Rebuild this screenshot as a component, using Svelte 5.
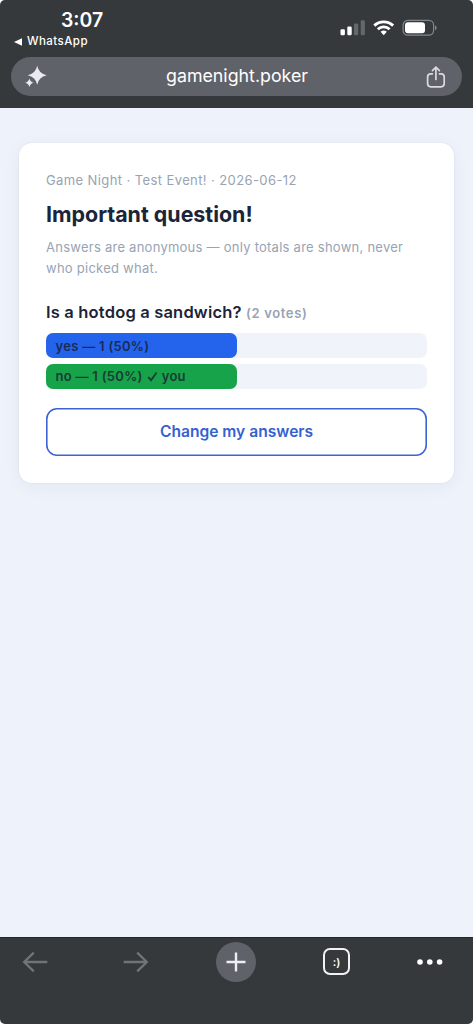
<script>
	let site = "gamenight.poker";
	let total = 2;
	let answers = [
		{ label: "yes", votes: 1, mine: false },
		{ label: "no", votes: 1, mine: true },
	];

	function percent(votes) {
		return Math.round((votes / total) * 100);
	}
</script>

<div class="screen">
	<header>
		<div class="status">
			<div class="clock">
				<span class="time">3:07</span>
				<span class="back">
					<svg width="8" height="8" viewBox="0 0 8 8"><path d="M0 4 8 0.3V7.7z" fill="#fff" /></svg>
					WhatsApp
				</span>
			</div>
			<svg class="indicators" width="98" height="18" viewBox="0 0 98 18">
				<g fill="#fff">
					<rect x="0.5" y="10.3" width="4.4" height="6" rx="1.2" />
					<rect x="7.3" y="7.6" width="4.4" height="8.7" rx="1.2" />
					<rect x="14" y="4.6" width="4.2" height="11.7" rx="1.2" opacity="0.24" />
					<rect x="20.7" y="1.3" width="4.2" height="15" rx="1.2" opacity="0.24" />
				</g>
				<g fill="none" stroke="#fff" stroke-width="2.9">
					<path d="M34.3 6.6A13.6 13.6 0 0 1 53.1 6.6" />
					<path d="M37.8 10.3A8.5 8.5 0 0 1 49.6 10.3" />
				</g>
				<path d="M40.6 12.8A4.6 4.6 0 0 1 46.8 12.8L43.7 16.2z" fill="#fff" />
				<rect x="63.1" y="1.4" width="30.5" height="14.8" rx="4.7" fill="none" stroke="#84878a" stroke-width="1.2" />
				<rect x="65" y="3.3" width="20" height="11" rx="3" fill="#fff" />
				<path d="M95 6.5c2.2.7 2.2 3.9 0 4.6z" fill="#84878a" />
			</svg>
		</div>
		<div class="address">
			<svg width="24" height="24" viewBox="0 0 24 24" fill="#e9ebf1">
				<path d="M13.2 0.8Q14.8 8.7 22.7 10.3Q14.8 11.9 13.2 19.8Q11.6 11.9 3.7 10.3Q11.6 8.7 13.2 0.8z" />
				<path d="M5.4 13.4Q6.2 16.9 9.7 17.7Q6.2 18.5 5.4 22Q4.6 18.5 1.1 17.7Q4.6 16.9 5.4 13.4z" />
			</svg>
			<span class="site">{site}</span>
			<svg width="20" height="24" viewBox="0 0 20 24" fill="none" stroke="#d9dbe1" stroke-width="1.7" stroke-linecap="round" stroke-linejoin="round">
				<path d="M6.4 8.8H4.8Q1.6 8.8 1.6 12V18.6Q1.6 21.8 4.8 21.8H15Q18.2 21.8 18.2 18.6V12Q18.2 8.8 15 8.8H13.4" />
				<path d="M9.9 14.5V2.4M6.4 5.6 9.9 2.2 13.4 5.6" />
			</svg>
		</div>
	</header>

	<main>
		<section class="card">
			<p class="event">Game Night · Test Event! · 2026-06-12</p>
			<h1>Important question!</h1>
			<p class="note">Answers are anonymous — only totals are shown, never who picked what.</p>
			<h2>Is a hotdog a sandwich? <small>({total} votes)</small></h2>
			{#each answers as answer}
				<div class="bar">
					<div class="fill" class:mine={answer.mine} style="width: {percent(answer.votes)}%">
						{answer.label} — {answer.votes} ({percent(answer.votes)}%)
						{#if answer.mine}
							<svg width="11" height="11" viewBox="0 0 11 11"><path d="M1.2 6 4 9.2 9.6 1.5" /></svg>
							you
						{/if}
					</div>
				</div>
			{/each}
			<button>Change my answers</button>
		</section>
	</main>

	<nav>
		<svg width="26" height="22" viewBox="0 0 26 22" class="arrow"><path d="M25.3 11H2M11.8 1.6 2.2 11 11.8 20.4" /></svg>
		<svg width="26" height="22" viewBox="0 0 26 22" class="arrow"><path d="M0.7 11H24M14.2 1.6 23.8 11 14.2 20.4" /></svg>
		<span class="new">
			<svg width="20" height="20" viewBox="0 0 20 20"><path d="M10 0.5V19.5M0.5 10H19.5" stroke="#eceef2" stroke-width="2.4" /></svg>
		</span>
		<span class="tabs">:)</span>
		<svg class="more" width="26" height="6" viewBox="0 0 26 6" fill="#fff">
			<circle cx="3" cy="3" r="2.8" />
			<circle cx="12.8" cy="3" r="2.8" />
			<circle cx="22.6" cy="3" r="2.8" />
		</svg>
	</nav>
</div>

<style>
	:global(body) {
		margin: 0;
		background: #fff;
	}

	.screen {
		display: flex;
		flex-direction: column;
		height: 1024px;
		overflow: hidden;
		border-radius: 5px;
		background: #eef2fb;
		font-family: Inter, "Liberation Sans", sans-serif;
	}

	svg {
		display: block;
		flex: none;
	}

	header {
		box-sizing: border-box;
		height: 108px;
		padding: 0 11px;
		background: #35393c;
		color: #fff;
	}

	.status {
		display: flex;
		justify-content: space-between;
		height: 57px;
	}

	.clock {
		display: flex;
		flex-direction: column;
		padding: 8px 0 0 3px;
	}

	.time {
		padding-left: 47px;
		font-size: 19.4px;
		font-weight: 600;
		line-height: 25px;
	}

	.back {
		display: flex;
		align-items: center;
		gap: 5px;
		font-size: 11.5px;
		font-weight: 500;
		line-height: 17px;
		letter-spacing: 0.45px;
	}

	.indicators {
		margin: 19px 24px 0 0;
	}

	.address {
		display: flex;
		align-items: center;
		justify-content: space-between;
		box-sizing: border-box;
		height: 39px;
		padding: 0 16px 0 13px;
		border-radius: 20px;
		background: #5f6269;
	}

	.site {
		padding-bottom: 2px;
		font-size: 17.8px;
		line-height: 24px;
	}

	main {
		flex: 1;
		padding: 35px 19px 0;
	}

	.card {
		box-sizing: border-box;
		height: 340px;
		padding: 27px 27px 0;
		border-radius: 13px;
		background: #fff;
		box-shadow: 0 0 2px #1e293b18, 0 4px 18px #1e293b0d;
		color: #1b2438;
	}

	p {
		margin: 0;
		color: #98a3b3;
		font-size: 13px;
		line-height: 21px;
	}

	.event {
		letter-spacing: 0.4px;
	}

	.note {
		letter-spacing: 0.25px;
	}

	h1 {
		margin: 10px 0 9px;
		font-size: 21.4px;
		line-height: 27px;
	}

	h2 {
		margin: 21px 0 8px;
		font-size: 16.5px;
		font-weight: 600;
		line-height: 24px;
		letter-spacing: 0.18px;
	}

	small {
		color: #98a3b3;
		font-size: 13px;
		letter-spacing: 0.65px;
	}

	.bar {
		height: 25px;
		margin-bottom: 5.5px;
		border-radius: 7px;
		background: #f0f3f9;
	}

	.fill {
		display: flex;
		align-items: center;
		gap: 4px;
		box-sizing: border-box;
		height: 100%;
		padding: 0 0 0 9.5px;
		border-radius: 7px;
		background: #2463eb;
		color: #1b2b55;
		font-size: 13px;
		font-weight: 600;
		letter-spacing: 0.29px;
		white-space: nowrap;
	}

	.mine {
		background: #17a34a;
		color: #173b35;
	}

	.fill path {
		fill: none;
		stroke: #173b35;
		stroke-width: 1.8;
	}

	button {
		display: block;
		width: 100%;
		height: 48px;
		margin-top: 19px;
		padding: 0 0 1px;
		border: 0;
		border-radius: 11px;
		background: #fff;
		box-shadow: inset 0 0 0 1.6px #3d63d3;
		color: #3561cf;
		font: 600 15.6px Inter, sans-serif;
	}

	nav {
		display: grid;
		grid-template-columns: 101px 93.5px 106.5px 94px auto;
		align-items: start;
		box-sizing: border-box;
		height: 87px;
		padding: 5px 0 0 22px;
		border-top: 1px solid #222628;
		background: #35393c;
	}

	.arrow {
		margin-top: 8px;
		fill: none;
		stroke: #707477;
		stroke-width: 2.3;
	}

	.new {
		display: grid;
		place-items: center;
		width: 40px;
		height: 40px;
		margin: -1px 0 0 -0.5px;
		border-radius: 50%;
		background: #5f6269;
	}

	.tabs {
		display: grid;
		place-items: center;
		box-sizing: border-box;
		width: 27px;
		height: 27px;
		margin-top: 5px;
		border: 2px solid #f1f2f4;
		border-radius: 7px;
		color: #fff;
		font-size: 11px;
		font-weight: 600;
	}

	.more {
		margin-top: 16px;
	}
</style>
